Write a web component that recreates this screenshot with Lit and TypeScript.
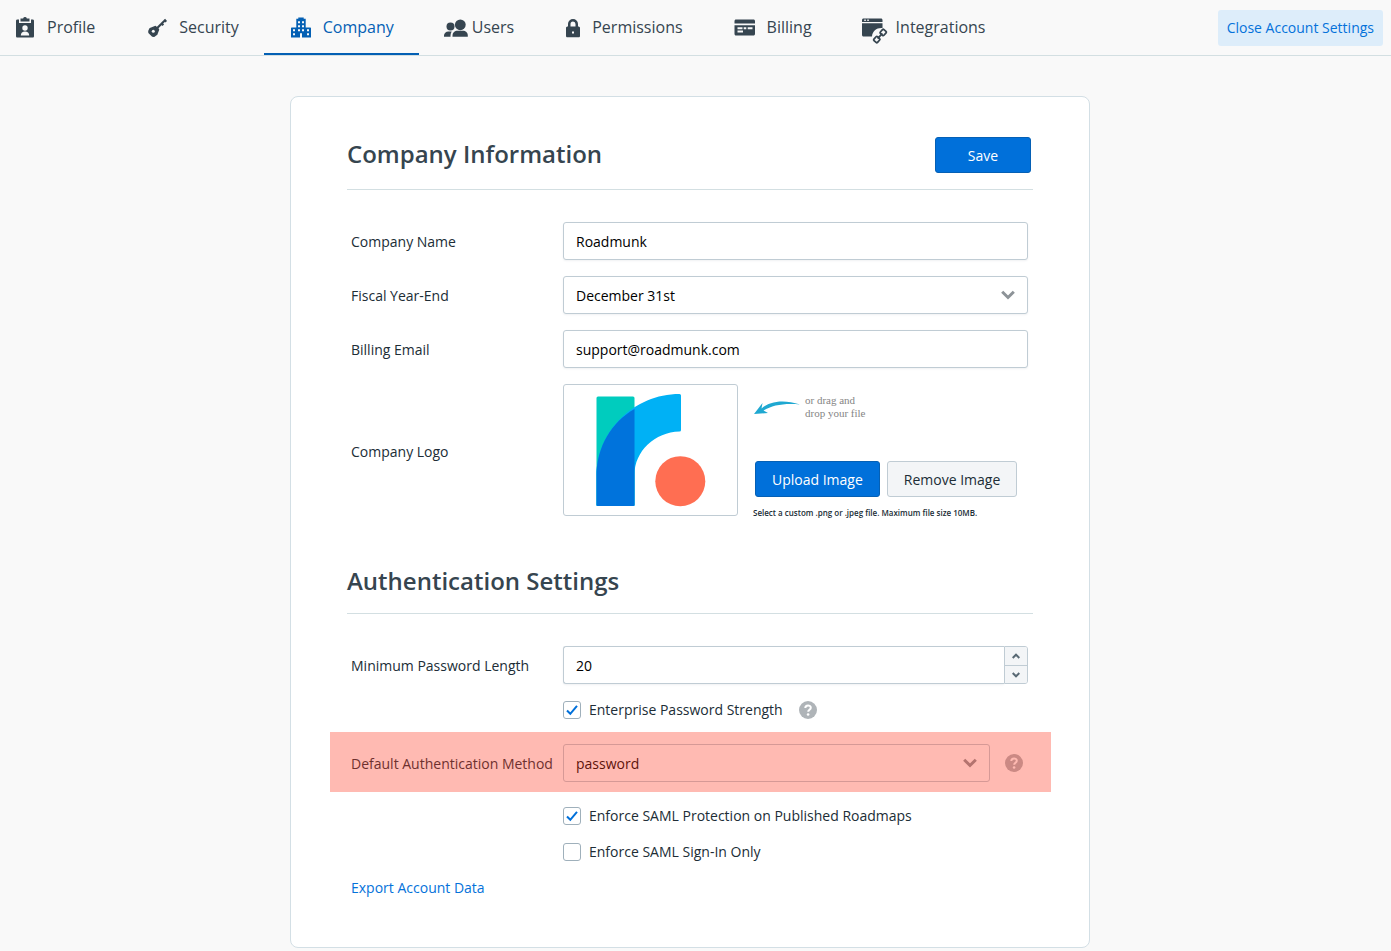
import { LitElement, html, css, svg, nothing, TemplateResult } from "lit";
import { customElement, property, state } from "lit/decorators.js";
import { classMap } from "lit/directives/class-map.js";

interface Tab {
  id: string;
  label: string;
  width: number;
  glyph: TemplateResult;
}

const TABS: Tab[] = [
  {
    id: "profile",
    label: "Profile",
    width: 24,
    glyph: svg`
      <path d="M4.500 4.500H6V8h12V4.500h1.500C20.500 4.500 21 5 21 6v15c0 1-.5 1.500-1.500 1.500h-15C3.500 22.500 3 22 3 21V6C3 5 3.500 4.500 4.500 4.500z"/>
      <path d="M7.500 3.500h2.600a2 2 0 0 1 3.800 0h2.600v3h-9z"/>
      <circle cx="12" cy="13" r="2.700" fill="#f9f9f9"/>
      <path d="M7.800 20.500c0-2.500 1.700-4 4.200-4s4.200 1.500 4.200 4z" fill="#f9f9f9"/>`,
  },
  {
    id: "security",
    label: "Security",
    width: 24,
    glyph: svg`
      <path d="M5.200 14l5-2.200 3 2.800-1.800 4.700-2.400 1.700-1.400-.2-3.300-3.200-.1-1.500z" stroke="currentColor" stroke-width="2" stroke-linejoin="round"/>
      <path d="M11 14.200l9-9M19.300 4.500l1.900 2.200M16 7.800l2.300 2.400" fill="none" stroke="currentColor" stroke-width="2.200"/>
      <circle cx="8.300" cy="16.300" r="1.500" fill="#f9f9f9"/>`,
  },
  {
    id: "company",
    label: "Company",
    width: 24,
    glyph: svg`
      <path fill-rule="evenodd" d="M9.300 2.500h5.400v1.200h2V12.500H21c.7 0 1 .3 1 1v9h-9v-4.300h-2v4.300H2v-9c0-.7.3-1 1-1h4.300V3.700h2zM9 6.300v2h2v-2zm4 0v2h2v-2zm-4 4v2h2v-2zm4 0v2h2v-2zm-4 4v2h2v-2zm4 0v2h2v-2zM4 14.300v2h2v-2zm0 4v2h2v-2zm14-4v2h2v-2zm0 4v2h2v-2z"/>`,
  },
  {
    id: "users",
    label: "Users",
    width: 24,
    glyph: svg`
      <circle cx="6.500" cy="11.500" r="4"/>
      <path d="M0 21.800v-1.200c0-2.600 2-4.200 4.300-4.200h3.400c-.8 1.200-1.200 2.600-1.200 4v1.400z"/>
      <circle cx="16.300" cy="9.800" r="5.400"/>
      <path d="M8.500 21.800v-1.100c0-3.100 2.300-4.900 4.900-4.900h5.500c2.700 0 4.900 1.800 4.900 4.900v1.100z"/>`,
  },
  {
    id: "permissions",
    label: "Permissions",
    width: 18,
    glyph: svg`
      <path fill-rule="evenodd" d="M4 11.500V9a5 5 0 0 1 10 0v2.500c1.300 0 2 .5 2 1.500v7.800c0 1-.5 1.500-1.500 1.500h-11C2.500 22.300 2 21.800 2 20.800V13c0-1 .7-1.500 2-1.500zM6.500 11.500h5V9a2.500 2.500 0 0 0-5 0zM8 16.500v2h2v-2z"/>`,
  },
  {
    id: "billing",
    label: "Billing",
    width: 24,
    glyph: svg`
      <path fill-rule="evenodd" d="M3 4.500h17.500c.8 0 1.500.7 1.500 1.500v2.500H1.500V6C1.500 5.200 2.200 4.500 3 4.500zM1.500 10.300H22V19c0 .8-.7 1.500-1.500 1.500H3c-.8 0-1.500-.7-1.500-1.500zM4.500 12.300v2h5v-2zm6.200 0v2h2.600v-2zm4 0v2h4.800v-2zM4.500 15.500v2H10v-2z"/>`,
  },
  {
    id: "integrations",
    label: "Integrations",
    width: 24,
    glyph: svg`
      <path fill-rule="evenodd" d="M1.500 3.500h17.500c.8 0 1.500.7 1.500 1.500v2H0V5C0 4.200.7 3.500 1.500 3.500zM2.300 4.600V6h1.500V4.600zm3 0V6h1.500V4.600zM0 8.300h20.500V13c-5.500-.6-10 2.500-10.500 8.500H1.500C.7 21.500 0 20.800 0 20z"/>
      <g fill="none" stroke="currentColor" stroke-width="1.800" transform="rotate(-48 18 21)">
        <rect x="10.600" y="18.600" width="5.200" height="4.800" rx="1"/>
        <rect x="20.200" y="18.600" width="5.200" height="4.800" rx="1"/>
        <path d="M14.500 21h7"/>
      </g>`,
  },
];

@customElement("settings-nav")
export class SettingsNav extends LitElement {
  @property() active = "company";

  static styles = css`
    :host {
      display: block;
      color: #364550;
      border-bottom: 1px solid #d3dfe2;
    }
    .bar {
      display: flex;
      align-items: center;
      justify-content: space-between;
      height: 55px;
      padding-right: 8px;
    }
    .tabs {
      display: flex;
      height: 100%;
    }
    .tab {
      box-sizing: border-box;
      display: flex;
      align-items: center;
      gap: 10px;
      padding: 0 25px;
      border-bottom: 2px solid transparent;
      color: inherit;
      font-size: 16px;
      line-height: 24px;
      text-decoration: none;
      white-space: nowrap;
    }
    .tab:first-child {
      padding-left: 13px;
    }
    .tight {
      gap: 4px;
    }
    .active {
      color: #0460b4;
      border-bottom-color: #0460b4;
    }
    .icon {
      flex: none;
      overflow: visible;
      fill: currentColor;
    }
    .close {
      height: 36px;
      padding: 0 9px;
      border: 0;
      border-radius: 3px;
      background: #ddedfa;
      color: #0472da;
      font: inherit;
      white-space: nowrap;
    }
  `;

  render() {
    return html`
      <div class="bar">
        <nav class="tabs" aria-label="Account settings">
          ${TABS.map(
            (tab) => html`<a
              href="#${tab.id}"
              class=${classMap({
                tab: true,
                active: tab.id === this.active,
                tight: tab.id === "users",
              })}
              aria-current=${tab.id === this.active ? "page" : nothing}
              ><svg class="icon" width=${tab.width} height="24" viewBox="0 0 ${tab.width} 24" aria-hidden="true">
                ${tab.glyph}</svg
              ><span>${tab.label}</span></a
            >`
          )}
        </nav>
        <button class="close" type="button">Close Account Settings</button>
      </div>
    `;
  }
}

@customElement("app-root")
export class AppRoot extends LitElement {
  @state() private minLength = 20;

  static styles = css`
    :host {
      display: block;
      min-height: 100vh;
      background: #f9f9f9;
      color: #202d36;
      font-family: "Open Sans", "Noto Sans", sans-serif;
      font-size: 14px;
      line-height: 20px;
    }
    .card {
      box-sizing: border-box;
      max-width: 800px;
      margin: 40px auto 0;
      padding: 40px 56px 49px;
      border: 1px solid #d3dfe5;
      border-radius: 8px;
      background: #fff;
    }
    .page {
      padding: 0 21px 3px 10px;
      display: flow-root;
    }
    .head {
      display: flex;
      align-items: flex-start;
      justify-content: space-between;
      margin-bottom: 32px;
      padding: 0 2px 16px 0;
      border-bottom: 1px solid #d3dfe2;
    }
    .second {
      margin-top: 46px;
    }
    h2 {
      margin: 0;
      color: #36454f;
      font-size: 24px;
      font-weight: 600;
      line-height: 33px;
    }
    .rows {
      display: grid;
      gap: 16px;
      padding: 0 5px 0 4px;
    }
    .row {
      display: grid;
      grid-template-columns: 212px minmax(0, 1fr);
      align-items: center;
    }
    .label {
      padding-top: 2px;
      white-space: nowrap;
    }
    .field {
      box-sizing: border-box;
      width: 100%;
      height: 38px;
      margin: 0;
      padding: 1px 12px 0;
      border: 1px solid #c0ccd4;
      border-radius: 3px;
      outline: 0;
      background: #fff;
      box-shadow: 0 1px 2px rgba(60, 80, 100, 0.08);
      color: #000;
      font: inherit;
      appearance: none;
    }
    .field::-webkit-inner-spin-button {
      appearance: none;
      margin: 0;
    }
    .stack {
      display: grid;
      flex: 1;
      align-items: center;
    }
    .stack > * {
      grid-area: 1 / 1;
    }
    .chevron {
      justify-self: end;
      margin-right: 13px;
      fill: none;
      stroke: #8d9398;
      stroke-width: 3;
      pointer-events: none;
    }
    .number {
      display: flex;
    }
    .number .field {
      flex: 1;
      border-right: 0;
      border-radius: 3px 0 0 3px;
    }
    .steps {
      box-sizing: border-box;
      display: grid;
      grid-template-rows: 1fr 1fr;
      width: 24px;
      height: 38px;
      border: 1px solid #c0ccd4;
      border-radius: 0 3px 3px 0;
      overflow: hidden;
    }
    .step {
      display: grid;
      place-items: center;
      padding: 0;
      border: 0;
      background: #f3f5f7;
    }
    .step + .step {
      border-top: 1px solid #c0ccd4;
    }
    .step svg {
      fill: none;
      stroke: #5a6a75;
      stroke-width: 2;
    }
    .button {
      height: 36px;
      padding: 1px 16px 0;
      border: 1px solid #c0ccd4;
      border-radius: 3px;
      background: #f3f5f7;
      color: #202d36;
      font: inherit;
      white-space: nowrap;
    }
    .primary {
      border-color: #0560b5;
      background: #0070da;
      color: #fff;
      font-weight: 500;
    }
    .save {
      width: 96px;
    }
    .upload {
      display: flex;
      align-items: flex-start;
      gap: 15px;
    }
    .preview {
      box-sizing: border-box;
      display: block;
      flex: none;
      width: 175px;
      height: 132px;
      border: 1px solid #c0ccd4;
      border-radius: 3px;
    }
    .hint {
      display: flex;
      gap: 5px;
      margin: 10px 0 41px 1px;
      color: #858585;
      font-family: "Liberation Serif", serif;
      font-size: 11px;
      line-height: 13px;
    }
    .actions {
      display: flex;
      gap: 7px;
      margin: 0 2px 10px;
    }
    .note {
      margin: 0;
      font-size: 8px;
      font-weight: 600;
      line-height: 11px;
    }
    .check {
      display: flex;
      align-items: center;
      height: 20px;
      margin-left: 212px;
    }
    .option {
      display: flex;
      align-items: center;
      gap: 8px;
    }
    .box {
      width: 18px;
      height: 18px;
      margin: 0;
      border: 1px solid #9fb0bb;
      border-radius: 3px;
      background: #fff;
      appearance: none;
    }
    .tick {
      visibility: hidden;
      fill: none;
      stroke: #0070da;
      stroke-width: 2;
      pointer-events: none;
    }
    .box:checked + .tick {
      visibility: visible;
    }
    .help {
      display: block;
      padding: 0;
      border: 0;
      background: none;
    }
    .help svg {
      display: block;
    }
    .check .help {
      margin-left: 16px;
    }
    .flagged {
      position: relative;
      margin: -4px -23px -2px -21px;
      padding: 12px 23px 10px 21px;
    }
    .flagged::after {
      content: "";
      position: absolute;
      inset: 0;
      background: rgba(255, 57, 34, 0.35);
      pointer-events: none;
    }
    .flagged .field {
      box-shadow: none;
    }
    .with-help {
      display: flex;
      align-items: center;
      gap: 15px;
      padding-right: 5px;
    }
    a {
      justify-self: start;
      color: #0472da;
      text-decoration: none;
    }
  `;

  private chevron() {
    return html`<svg class="chevron" width="14" height="10" viewBox="0 0 14 10" aria-hidden="true">
      <path d="M1.200 1.700L7 7.500l5.800-5.800" />
    </svg>`;
  }

  private help() {
    return html`<button class="help" type="button" aria-label="Help">
      <svg width="18" height="18" viewBox="0 0 18 18" aria-hidden="true">
        <circle cx="9" cy="9" r="9" fill="#afb4b8" />
        <path d="M6.300 7c0-3.500 5.500-3.300 5.500-.3 0 1.900-2.600 2.100-2.600 4" fill="none" stroke="#fff" stroke-width="2" />
        <circle cx="9.100" cy="13.500" r="1.300" fill="#fff" />
      </svg>
    </button>`;
  }

  private option(id: string, label: string, checked: boolean, help = false) {
    return html`<div class="check">
      <label class="option" for=${id}>
        <span class="stack">
          <input class="box" id=${id} type="checkbox" .checked=${checked} />
          <svg class="tick" width="18" height="18" viewBox="0 0 18 18" aria-hidden="true">
            <path d="M4 9.500l3.300 3.300L14 4.800" />
          </svg>
        </span>
        <span>${label}</span>
      </label>
      ${help ? this.help() : nothing}
    </div>`;
  }

  render() {
    return html`
      <settings-nav active="company"></settings-nav>
      <main class="page">
        <form class="card" @submit=${(e: Event) => e.preventDefault()}>
          <div class="head">
            <h2>Company Information</h2>
            <button class="button primary save" type="submit">Save</button>
          </div>
          <div class="rows">
            <div class="row">
              <label class="label" for="name">Company Name</label>
              <input class="field" id="name" type="text" value="Roadmunk" />
            </div>
            <div class="row">
              <label class="label" for="fiscal">Fiscal Year-End</label>
              <div class="stack">
                <select class="field" id="fiscal">
                  <option>December 31st</option>
                </select>
                ${this.chevron()}
              </div>
            </div>
            <div class="row">
              <label class="label" for="email">Billing Email</label>
              <input class="field" id="email" type="email" value="support@roadmunk.com" />
            </div>
            <div class="row">
              <span class="label">Company Logo</span>
              <div class="upload">
                <svg class="preview" viewBox="0 0 173 130" role="img" aria-label="Roadmunk logo">
                  <rect x="32.500" y="11.500" width="38" height="109.500" rx="1.500" fill="#00ccbe" />
                  <path
                    d="M32.500 121V91C32.500 46 70 9 115.500 9q1.500 0 1.500 1.500V45q0 1.500-1.500 1.500C91 47 70.500 66 70.500 90v31z"
                    fill="#00b1f5"
                  />
                  <path
                    d="M70.500 24C47.500 37 32.500 62 32.500 90v29.500q0 1.500 1.500 1.500h35q1.500 0 1.500-1.500z"
                    fill="#0073dc"
                  />
                  <circle cx="116.300" cy="96.200" r="25" fill="#ff6e52" />
                </svg>
                <div>
                  <div class="hint">
                    <svg width="46" height="26" viewBox="0 0 46 26" aria-hidden="true">
                      <path
                        d="M0 20L8.500 9 7.500 14.500C16 7 30 5.500 46 10.500 31 9 18.500 11 9.500 16.500L14 19z"
                        fill="#1fa8d1"
                      />
                    </svg>
                    <span>or drag and<br />drop your file</span>
                  </div>
                  <div class="actions">
                    <button class="button primary" type="button">Upload Image</button>
                    <button class="button" type="button">Remove Image</button>
                  </div>
                  <p class="note">Select a custom .png or .jpeg file. Maximum file size 10MB.</p>
                </div>
              </div>
            </div>
          </div>

          <div class="head second">
            <h2>Authentication Settings</h2>
          </div>
          <div class="rows">
            <div class="row">
              <label class="label" for="length">Minimum Password Length</label>
              <div class="number">
                <input
                  class="field"
                  id="length"
                  type="number"
                  .value=${String(this.minLength)}
                  @input=${(e: Event) => (this.minLength = Number((e.target as HTMLInputElement).value))}
                />
                <div class="steps">
                  <button class="step" type="button" aria-label="Increase" @click=${() => this.minLength++}>
                    <svg width="8" height="6" viewBox="0 0 8 6"><path d="M.7 5L4 1.700 7.300 5" /></svg>
                  </button>
                  <button class="step" type="button" aria-label="Decrease" @click=${() => this.minLength--}>
                    <svg width="8" height="6" viewBox="0 0 8 6"><path d="M.7 1L4 4.300 7.300 1" /></svg>
                  </button>
                </div>
              </div>
            </div>
            ${this.option("strength", "Enterprise Password Strength", true, true)}
            <div class="row flagged">
              <label class="label" for="method">Default Authentication Method</label>
              <div class="with-help">
                <div class="stack">
                  <select class="field" id="method">
                    <option>password</option>
                  </select>
                  ${this.chevron()}
                </div>
                ${this.help()}
              </div>
            </div>
            ${this.option("saml-published", "Enforce SAML Protection on Published Roadmaps", true)}
            ${this.option("saml-only", "Enforce SAML Sign-In Only", false)}
            <a href="#export">Export Account Data</a>
          </div>
        </form>
      </main>
    `;
  }
}
